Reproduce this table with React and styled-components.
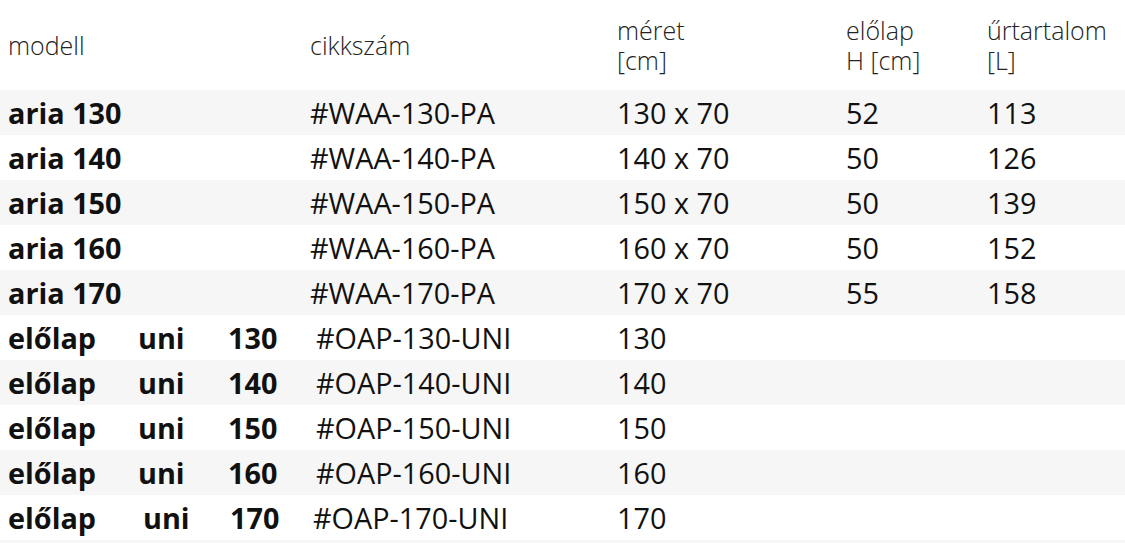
import React from "react";
import styled, { createGlobalStyle } from "styled-components";

const GlobalStyle = createGlobalStyle`
  html, body {
    margin: 0;
    padding: 0;
    background: #ffffff;
  }
  body {
    font-family: "Open Sans", "Liberation Sans", sans-serif;
    color: #111111;
    overflow: hidden;
  }
`;

const Table = styled.div`
  width: 1125px;
  height: 543px;
  overflow: hidden;
  display: flex;
  flex-direction: column;
`;

const Row = styled.div`
  display: grid;
  grid-template-columns: 302px 307px 229px 141px 1fr;
  align-items: center;
  flex: 0 0 ${(p) => (p.$head ? "90px" : "45px")};
  padding-left: 8px;
  background: ${(p) => (p.$shaded ? "#f6f6f6" : "#ffffff")};
`;

const HeadCell = styled.div`
  font-size: 25px;
  font-weight: 300;
  line-height: 30px;
  color: #222222;
`;

const Cell = styled.div`
  font-size: 28.8px;
  font-weight: ${(p) => (p.$bold ? 700 : 400)};
  line-height: 45px;
  white-space: nowrap;
  margin-left: ${(p) => p.$shift || 0}px;
`;

const ModelParts = styled.div`
  display: flex;
  align-items: center;
  font-size: 28.8px;
  font-weight: 700;
  line-height: 45px;
  white-space: nowrap;
`;

const Part = styled.span`
  box-sizing: border-box;
  display: inline-block;
  width: ${(p) => p.$w}px;
  padding-left: ${(p) => p.$pad || 0}px;
`;

const models = [
  { name: "aria 130", code: "#WAA-130-PA", size: "130 x 70", front: "52", volume: "113" },
  { name: "aria 140", code: "#WAA-140-PA", size: "140 x 70", front: "50", volume: "126" },
  { name: "aria 150", code: "#WAA-150-PA", size: "150 x 70", front: "50", volume: "139" },
  { name: "aria 160", code: "#WAA-160-PA", size: "160 x 70", front: "50", volume: "152" },
  { name: "aria 170", code: "#WAA-170-PA", size: "170 x 70", front: "55", volume: "158" },
];

const panels = [
  { size: "130", code: "#OAP-130-UNI", uniPad: 0, sizePad: 0, codeShift: 6 },
  { size: "140", code: "#OAP-140-UNI", uniPad: 0, sizePad: 0, codeShift: 6 },
  { size: "150", code: "#OAP-150-UNI", uniPad: 0, sizePad: 0, codeShift: 6 },
  { size: "160", code: "#OAP-160-UNI", uniPad: 0, sizePad: 0, codeShift: 6 },
  { size: "170", code: "#OAP-170-UNI", uniPad: 5, sizePad: 2, codeShift: 3 },
];

const App = () => {
  return (
    <>
      <GlobalStyle />
      <Table>
        <Row $head>
          <HeadCell>modell</HeadCell>
          <HeadCell>cikkszám</HeadCell>
          <HeadCell>
            méret
            <br />
            [cm]
          </HeadCell>
          <HeadCell>
            előlap
            <br />H [cm]
          </HeadCell>
          <HeadCell>
            űrtartalom
            <br />
            [L]
          </HeadCell>
        </Row>
        {models.map((m, i) => (
          <Row key={m.name} $shaded={i % 2 === 0}>
            <Cell $bold>{m.name}</Cell>
            <Cell>{m.code}</Cell>
            <Cell>{m.size}</Cell>
            <Cell>{m.front}</Cell>
            <Cell>{m.volume}</Cell>
          </Row>
        ))}
        {panels.map((p, i) => (
          <Row key={p.code} $shaded={i % 2 === 1}>
            <ModelParts>
              <Part $w={130}>előlap</Part>
              <Part $w={90} $pad={p.uniPad}>
                uni
              </Part>
              <Part $w={70} $pad={p.sizePad}>
                {p.size}
              </Part>
            </ModelParts>
            <Cell $shift={p.codeShift}>{p.code}</Cell>
            <Cell>{p.size}</Cell>
            <Cell />
            <Cell />
          </Row>
        ))}
        <Row $shaded />
      </Table>
    </>
  );
};

export default App;
